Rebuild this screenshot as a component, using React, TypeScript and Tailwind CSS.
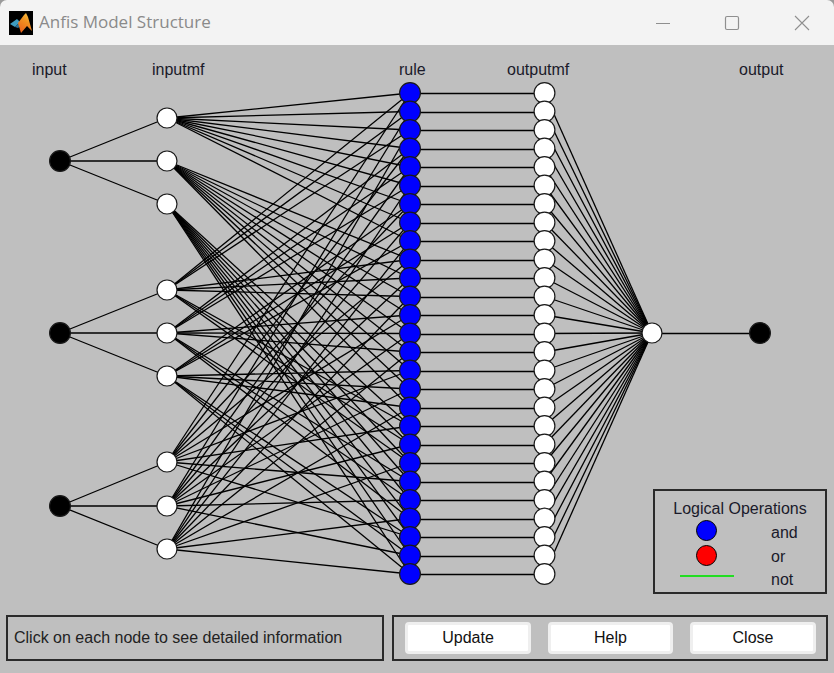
const RX = 410, MX = 167, IX = 60, OMX = 544.5, SX = 652, OX = 760;
const inputs = [161, 333, 506];
const mfs = [[118, 161, 204], [290, 333, 376], [462, 506, 549]];
const ruleY = Array.from({ length: 27 }, (_, i) => 93 + (i * 481) / 26);
const combos = ruleY.map((_, i) => [Math.floor(i / 9), Math.floor(i / 3) % 3, i % 3]);

function Network() {
  return (
    <svg width="834" height="570" viewBox="0 45 834 570" className="absolute left-0 top-0">
      <g stroke="#000" strokeWidth="1.3" fill="none">
        {inputs.map((y, k) => mfs[k].map((m, j) => <line key={`a${k}${j}`} x1={IX} y1={y} x2={MX} y2={m} />))}
        {combos.map((c, i) => c.map((m, k) => <line key={`b${i}${k}`} x1={MX} y1={mfs[k][m]} x2={RX} y2={ruleY[i]} />))}
        {ruleY.map((y, i) => <line key={`c${i}`} x1={RX} y1={Math.round(y) + 0.5} x2={OMX} y2={Math.round(y) + 0.5} />)}
        {ruleY.map((y, i) => <line key={`d${i}`} x1={OMX} y1={y} x2={SX} y2={333} />)}
        <line x1={SX} y1={333.5} x2={OX} y2={333.5} />
      </g>
      <g stroke="#1a1a1a" strokeWidth="1.2">
        {inputs.map(y => <circle key={y} cx={IX} cy={y} r="10.4" fill="#000" />)}
        {mfs.flat().map(y => <circle key={y} cx={MX} cy={y} r="10" fill="#fff" />)}
        {ruleY.map((y, i) => <circle key={i} cx={RX} cy={y} r="10.4" fill="#0000ff" />)}
        {ruleY.map((y, i) => <circle key={i} cx={OMX} cy={y} r="10.4" fill="#fff" />)}
        <circle cx={SX} cy={333} r="10" fill="#fff" />
        <circle cx={OX} cy={333} r="10.4" fill="#000" />
      </g>
    </svg>
  );
}

function Logo() {
  return (
    <svg width="24" height="24" viewBox="0 0 24 24" className="shrink-0">
      <defs>
        <linearGradient id="mem" x1="0.2" y1="1" x2="0.7" y2="0">
          <stop offset="0" stopColor="#e8601c" />
          <stop offset="0.6" stopColor="#f09020" />
          <stop offset="1" stopColor="#f8c040" />
        </linearGradient>
      </defs>
      <rect width="24" height="24" fill="#000" />
      <path d="M1 13 L8 8 L11 11 L6 16 Z" fill="#3f9cc0" />
      <path d="M6 16 L11 11 L13 14 L9 17 Z" fill="#2f6f90" />
      <path d="M9 12 L15 4 L17 2 L19 6 L23 20 L18 15 L12 22 Z" fill="url(#mem)" />
    </svg>
  );
}

function Btn({ label, w }: { label: string; w: string }) {
  return (
    <button className={`${w} h-[32px] rounded-[4px] border-[3px] border-[#efefef] bg-white text-[16px] leading-none text-[#111]`}>
      {label}
    </button>
  );
}

export default function App() {
  return (
    <div className="flex h-[673px] w-[834px] flex-col overflow-hidden bg-[#9a9a9a] font-['Liberation_Sans',Arial,sans-serif]">
      <div className="flex h-[45px] shrink-0 items-center rounded-t-[7px] bg-[#f3f3f3] pl-[9px] pr-[24px]">
        <Logo />
        <span className="ml-[6px] flex-1 -mt-[2px] font-['Open_Sans',sans-serif] text-[17px] text-[#8a8a8a]">Anfis Model Structure</span>
        <svg width="16" height="16" viewBox="0 0 16 16" className="mr-[53px]" fill="none" stroke="#8f8f8f" strokeWidth="1">
          <path d="M1 8.5H15" />
        </svg>
        <svg width="16" height="16" viewBox="0 0 16 16" className="mr-[54px]" fill="none" stroke="#8f8f8f" strokeWidth="1.2">
          <rect x="1.5" y="1.5" width="13" height="13" rx="1.5" />
        </svg>
        <svg width="16" height="16" viewBox="0 0 16 16" fill="none" stroke="#8f8f8f" strokeWidth="1.1">
          <path d="M1 1L15 15M15 1L1 15" />
        </svg>
      </div>

      <div className="flex flex-1 flex-col bg-[#bfbfbf]">
        <div className="relative flex-1 text-[16px] leading-[18px] text-[#1a1a2a]">
          <Network />
          <span className="absolute left-[32px] top-[16px]">input</span>
          <span className="absolute left-[152px] top-[16px]">inputmf</span>
          <span className="absolute left-[399px] top-[16px]">rule</span>
          <span className="absolute left-[507px] top-[16px]">outputmf</span>
          <span className="absolute left-[739px] top-[16px]">output</span>

          <div className="absolute left-[653px] top-[444px] h-[105px] w-[174px] border-2 border-[#2a2a2a] pt-[9px]">
            <div className="text-center leading-[18px]">Logical Operations</div>
            <div className="flex h-[24px] items-center">
              <span className="ml-[41px] h-[21px] w-[21px] rounded-full border border-black bg-[#0000ff]" />
              <span className="ml-[54px] pt-[6px]">and</span>
            </div>
            <div className="mt-[1px] flex h-[25px] items-center">
              <span className="ml-[41px] h-[21px] w-[21px] rounded-full border border-black bg-[#ff0000]" />
              <span className="ml-[54px] pt-[3px]">or</span>
            </div>
            <div className="flex h-[22px] items-start">
              <span className="ml-[25px] mt-[7px] h-[2px] w-[54px] bg-[#22dd22]" />
              <span className="ml-[37px] mt-[3px]">not</span>
            </div>
          </div>
        </div>

        <div className="flex h-[58px] shrink-0 gap-[8px] pl-[6px] pr-[6px] pb-[12px]">
          <div className="flex w-[378px] items-center border-2 border-[#2a2a2a] pl-[6px] text-[16px] text-[#222]">
            Click on each node to see detailed information
          </div>
          <div className="flex flex-1 items-center gap-[17px] border-2 border-[#2a2a2a] pl-[11px]">
            <Btn label="Update" w="w-[126px]" />
            <Btn label="Help" w="w-[125px]" />
            <Btn label="Close" w="w-[126px]" />
          </div>
        </div>
      </div>
    </div>
  );
}
